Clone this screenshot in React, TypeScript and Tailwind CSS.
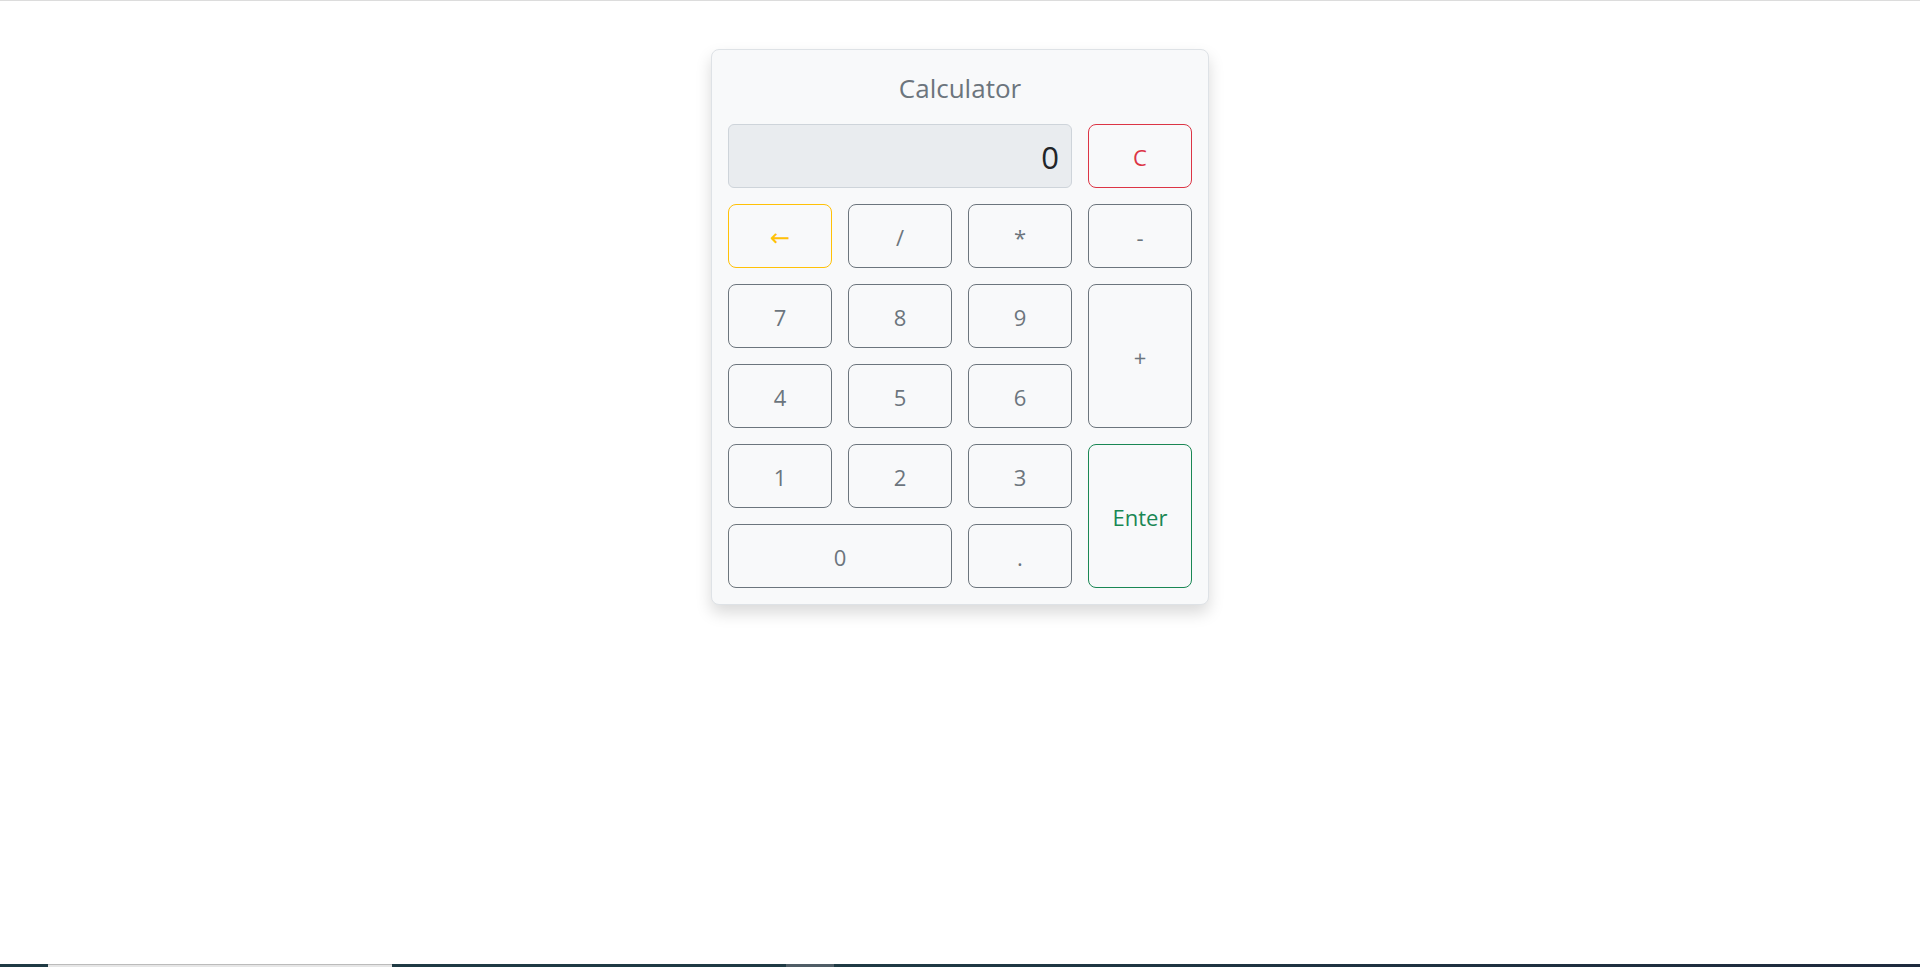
import React from 'react';

const font = { fontFamily: '"Open Sans", "Noto Sans", sans-serif' };

function Key({
  label,
  className = '',
  tone = 'secondary',
}: {
  label: string;
  className?: string;
  tone?: 'secondary' | 'danger' | 'warning' | 'success';
}) {
  const tones = {
    secondary: 'border-[#6c757d] text-[#6c757d]',
    danger: 'border-[#dc3545] text-[#dc3545]',
    warning: 'border-[#ffc107] text-[#ffc107]',
    success: 'border-[#198754] text-[#198754]',
  };
  return (
    <button
      className={`flex items-center justify-center rounded-lg border bg-transparent pt-[3px] text-[22px] ${tones[tone]} ${className}`}
    >
      {label}
    </button>
  );
}

export default function App() {
  return (
    <div className="flex h-screen flex-col bg-white" style={font}>
      <div className="h-px bg-[#dcdcdc]" />
      <main className="flex flex-1 justify-center">
        <div className="mt-12 h-fit w-[498px] rounded-lg border border-[#dee2e6] bg-[#f8f9fa] p-4 shadow-[0_8px_16px_rgba(0,0,0,0.15)]">
          <h3 className="mb-[18px] mt-1 text-center text-[26px] leading-[36px] text-[#6c757d]">
            Calculator
          </h3>
          <div className="grid grid-cols-[repeat(4,104px)] grid-rows-[repeat(6,64px)] gap-4">
            <div className="col-span-3 flex items-center justify-end rounded-md border border-[#ced4da] bg-[#e9ecef] px-3 pt-[3px] text-[31px] text-[#212529]">
              0
            </div>
            <Key label="C" tone="danger" />
            <button className="flex items-center justify-center rounded-lg border border-[#ffc107] bg-transparent pt-[4px] text-[24px] text-[#ffc107]" style={{ fontFamily: '"DejaVu Sans", sans-serif' }}>
              ←
            </button>
            <Key label="/" />
            <Key label="*" />
            <Key label="-" />
            <Key label="7" />
            <Key label="8" />
            <Key label="9" />
            <Key label="+" className="row-span-2" />
            <Key label="4" />
            <Key label="5" />
            <Key label="6" />
            <Key label="1" />
            <Key label="2" />
            <Key label="3" />
            <Key label="Enter" tone="success" className="row-span-2" />
            <Key label="0" className="col-span-2" />
            <Key label="." />
          </div>
        </div>
      </main>
      <div className="flex h-[3px]">
        <div className="w-[48px] bg-[#1f3a44]" />
        <div className="w-[344px] border-t border-[#bbbbbb] bg-[#e6e6e6]" />
        <div className="w-[394px] bg-[#1f3a44]" />
        <div className="w-[48px] bg-[#4f5d66]" />
        <div className="flex-1 bg-gradient-to-r from-[#1f3a44] to-[#1e2a3d]" />
      </div>
    </div>
  );
}
